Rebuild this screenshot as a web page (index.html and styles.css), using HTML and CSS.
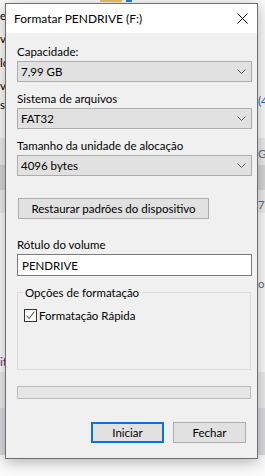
FILE: index.html
```html
<!DOCTYPE html>
<html lang="pt-BR">
<head>
  <meta charset="UTF-8">
  <title>Formatar PENDRIVE (F:)</title>
  <link rel="stylesheet" href="styles.css">
</head>
<body>

  <!-- explorer window behind the dialog -->
  <div id="desktop">
    <div class="top-icons">
      <span class="folder"></span>
      <span class="folder-blue"></span>
      <span class="top-text">Música</span>
    </div>
    <span class="frag left" style="top: 8px;">e</span>
    <span class="frag left" style="top: 31px;">vo</span>
    <span class="frag left" style="top: 55px;">lo</span>
    <span class="frag left" style="top: 78px;">v</span>
    <span class="frag left" style="top: 97px;">st</span>
    <span class="frag left" style="top: 136px;">ve</span>
    <div class="band sel" style="top: 162px; height: 25px;"></div>
    <span class="frag left" style="top: 165px;">m</span>
    <span class="frag left purple" style="top: 354px;">it</span>

    <div class="band light" style="top: 138px; height: 27px;"></div>
    <div class="band mid" style="top: 165px; height: 25px;"></div>
    <div class="band light" style="top: 190px; height: 23px;"></div>
    <span class="frag right blue" style="top: 93px;">(4</span>
    <span class="frag right grey" style="top: 146px;">G</span>
    <span class="frag right grey" style="top: 197px;">7</span>
    <span class="frag right grey" style="top: 276px;">os</span>

    <div class="band light" style="top: 372px; height: 36px;"></div>
    <div class="band dark" style="top: 408px; height: 47px;"></div>
  </div>

  <div id="dialog">
    <div class="titlebar">
      <span class="title">Formatar PENDRIVE (F:)</span>
      <svg class="close" width="11" height="11" viewBox="0 0 11 11">
        <path d="M0.5 0.5 L10.5 10.5 M10.5 0.5 L0.5 10.5" stroke="#000" stroke-width="1" fill="none"/>
      </svg>
    </div>

    <div class="content">
      <label class="field-label first">Capacidade:</label>
      <div class="select">
        <span>7,99 GB</span>
        <svg class="chev" width="9" height="5" viewBox="0 0 9 5"><path d="M0.5 0.5 L4.5 4.5 L8.5 0.5" stroke="#606060" fill="none"/></svg>
      </div>

      <label class="field-label">Sistema de arquivos</label>
      <div class="select">
        <span>FAT32</span>
        <svg class="chev" width="9" height="5" viewBox="0 0 9 5"><path d="M0.5 0.5 L4.5 4.5 L8.5 0.5" stroke="#606060" fill="none"/></svg>
      </div>

      <label class="field-label">Tamanho da unidade de alocação</label>
      <div class="select">
        <span>4096 bytes</span>
        <svg class="chev" width="9" height="5" viewBox="0 0 9 5"><path d="M0.5 0.5 L4.5 4.5 L8.5 0.5" stroke="#606060" fill="none"/></svg>
      </div>

      <div class="btn restore">Restaurar padrões do dispositivo</div>

      <label class="field-label volume">Rótulo do volume</label>
      <div class="textbox">PENDRIVE</div>

      <fieldset class="group">
        <legend>Opções de formatação</legend>
        <div class="check-row">
          <span class="checkbox">
            <svg width="11" height="11" viewBox="0 0 11 11"><path d="M1.5 5.5 L4 8.5 L9.5 1.5" stroke="#555" stroke-width="1.1" fill="none"/></svg>
          </span>
          <span>Formatação Rápida</span>
        </div>
      </fieldset>

      <div class="progress"></div>

      <div class="actions">
        <div class="btn default">Iniciar</div>
        <div class="btn">Fechar</div>
      </div>
    </div>
  </div>

</body>
</html>
```

FILE: styles.css
```css
body {
  margin: 0;
  background-color: #fbfbfb;
  font-family: Lato, "Noto Sans", sans-serif;
  font-size: 11.5px;
  color: #000;
  overflow: hidden;
}

#desktop {
  position: relative;
  width: 265px;
  height: 476px;
}

.top-icons {
  position: absolute;
  top: -11px;
  left: 100px;
  display: flex;
  gap: 4px;
}

.folder {
  width: 22px;
  height: 13px;
  background-color: #e8c46a;
}

.folder-blue {
  width: 6px;
  height: 13px;
  background-color: #2a7fd4;
}

.top-text {
  margin-left: 10px;
  line-height: 14px;
}

.frag {
  position: absolute;
  line-height: 15px;
}

.left {
  left: 0;
}

.right {
  left: 258px;
}

.purple {
  color: #4a2a7a;
}

.blue {
  color: #1e64c8;
}

.grey {
  color: #5a6a80;
}

.band {
  position: absolute;
  left: 0;
  width: 265px;
}

.band.sel {
  width: 6px;
  background-color: #d9d9d9;
}

.band.light {
  background-color: #ececec;
}

.band.mid {
  background-color: #d6d6d6;
}

.band.dark {
  background-color: #dcdce0;
}

#dialog {
  position: absolute;
  left: 5px;
  top: 3px;
  width: 253px;
  height: 456px;
  box-sizing: border-box;
  border: 1px solid #6f6f6f;
  background-color: #f0f0f0;
  box-shadow: 0 3px 14px rgba(0, 0, 0, 0.3);
  display: flex;
  flex-direction: column;
}

.titlebar {
  height: 29px;
  background-color: #fff;
  display: flex;
  align-items: center;
  justify-content: space-between;
  padding: 0 9px 0 8px;
}

.title {
  font-size: 12px;
  line-height: 15px;
}

.close {
  display: block;
}

.content {
  padding: 11px 5px 0 11px;
  display: flex;
  flex-direction: column;
}

.field-label {
  display: block;
  line-height: 15px;
  margin-top: 9px;
  margin-bottom: 2px;
}

.field-label.first {
  margin-top: 0;
}

.field-label.volume {
  margin-top: 18px;
}

.select {
  height: 21px;
  box-sizing: border-box;
  border: 1px solid #adadad;
  background-color: #e1e1e1;
  display: flex;
  align-items: center;
  justify-content: space-between;
  padding: 0 5px 0 3px;
}

.btn {
  height: 21px;
  box-sizing: border-box;
  border: 1px solid #adadad;
  background-color: #e1e1e1;
  display: flex;
  align-items: center;
  justify-content: center;
}

.btn.restore {
  width: 191px;
  margin: 22px 0 0 1px;
}

.textbox {
  height: 22px;
  box-sizing: border-box;
  border: 1px solid #7a7a7a;
  background-color: #fff;
  padding: 0 4px;
  display: flex;
  align-items: center;
}

.group {
  margin: 9px 1px 0 0;
  padding: 0 5px;
  height: 85px;
  box-sizing: border-box;
  border: 1px solid #dcdcdc;
}

.group legend {
  padding: 0 2px;
  line-height: 15px;
}

.check-row {
  display: flex;
  align-items: center;
  gap: 2px;
  margin: 8px 0 0 1px;
  line-height: 15px;
}

.checkbox {
  width: 13px;
  height: 13px;
  box-sizing: border-box;
  border: 1px solid #333;
  background-color: #fff;
  display: flex;
  align-items: center;
  justify-content: center;
}

.checkbox svg {
  display: block;
}

.progress {
  margin: 16px 1px 0 0;
  height: 13px;
  box-sizing: border-box;
  border: 1px solid #bcbcbc;
  background-color: #e6e6e6;
}

.actions {
  margin-top: 23px;
  display: flex;
  justify-content: flex-end;
  gap: 9px;
  padding-right: 6px;
}

.actions .btn {
  width: 73px;
}

.btn.default {
  border: 2px solid #0078d7;
}
```
